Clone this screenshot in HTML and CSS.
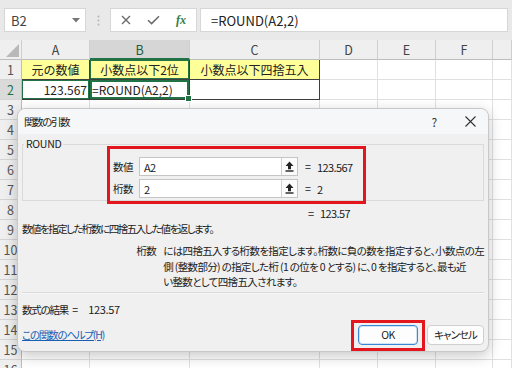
FILE: index.html
```html
<!DOCTYPE html>
<html lang="ja">
<head>
<meta charset="utf-8">
<link rel="stylesheet" href="styles.css">
</head>
<body>
<div class="app">
  <div class="fbar">
    <div class="namebox"><span>B2</span><svg class="dd" width="8" height="5" viewBox="0 0 8 5"><path d="M0 0H8L4 4.5Z" fill="#777"/></svg></div>
    <div class="dots"><svg width="3" height="11" viewBox="0 0 3 11"><circle cx="1.5" cy="1.5" r="1" fill="#b5b5b5"/><circle cx="1.5" cy="5.5" r="1" fill="#b5b5b5"/><circle cx="1.5" cy="9.5" r="1" fill="#b5b5b5"/></svg></div>
    <div class="fbtns">
      <svg width="10" height="10" viewBox="0 0 10 10"><path d="M1 1L9 9M9 1L1 9" stroke="#6b6b6b" stroke-width="1.4"/></svg>
      <svg width="13" height="10" viewBox="0 0 13 10"><path d="M1 5.2L4.6 8.6L12 1.2" stroke="#6b6b6b" stroke-width="1.5" fill="none"/></svg>
      <span class="fx">fx</span>
    </div>
    <div class="finput">=ROUND(A2,2)</div>
  </div>
  <div class="sheet">
    <div class="hd corner"><svg width="13" height="13" viewBox="0 0 13 13"><path d="M13 0V13H0Z" fill="#b9b9b9"/></svg></div>
    <div class="hd">A</div><div class="hd sel">B</div><div class="hd">C</div><div class="hd">D</div><div class="hd">E</div><div class="hd">F</div><div class="hd"></div>

    <div class="rh">1</div><div class="c t y ctr">元の数値</div><div class="c t y ctr gb1">小数点以下2位</div><div class="c t y ctr">小数点以下四捨五入</div><div class="c"></div><div class="c"></div><div class="c"></div><div class="c"></div>
    <div class="rh rsel">2</div><div class="c t r gb1">123.567</div><div class="c t gb2">=ROUND(A2,2)</div><div class="c t"></div><div class="c"></div><div class="c"></div><div class="c"></div><div class="c"></div>
    <div class="rh">3</div><div class="c"></div><div class="c"></div><div class="c"></div><div class="c"></div><div class="c"></div><div class="c"></div><div class="c"></div>
    <div class="rh">4</div><div class="c"></div><div class="c"></div><div class="c"></div><div class="c"></div><div class="c"></div><div class="c"></div><div class="c"></div>
    <div class="rh">5</div><div class="c"></div><div class="c"></div><div class="c"></div><div class="c"></div><div class="c"></div><div class="c"></div><div class="c"></div>
    <div class="rh">6</div><div class="c"></div><div class="c"></div><div class="c"></div><div class="c"></div><div class="c"></div><div class="c"></div><div class="c"></div>
    <div class="rh">7</div><div class="c"></div><div class="c"></div><div class="c"></div><div class="c"></div><div class="c"></div><div class="c"></div><div class="c"></div>
    <div class="rh">8</div><div class="c"></div><div class="c"></div><div class="c"></div><div class="c"></div><div class="c"></div><div class="c"></div><div class="c"></div>
    <div class="rh">9</div><div class="c"></div><div class="c"></div><div class="c"></div><div class="c"></div><div class="c"></div><div class="c"></div><div class="c"></div>
    <div class="rh">10</div><div class="c"></div><div class="c"></div><div class="c"></div><div class="c"></div><div class="c"></div><div class="c"></div><div class="c"></div>
    <div class="rh">11</div><div class="c"></div><div class="c"></div><div class="c"></div><div class="c"></div><div class="c"></div><div class="c"></div><div class="c"></div>
    <div class="rh">12</div><div class="c"></div><div class="c"></div><div class="c"></div><div class="c"></div><div class="c"></div><div class="c"></div><div class="c"></div>
    <div class="rh">13</div><div class="c"></div><div class="c"></div><div class="c"></div><div class="c"></div><div class="c"></div><div class="c"></div><div class="c"></div>
    <div class="rh">14</div><div class="c"></div><div class="c"></div><div class="c"></div><div class="c"></div><div class="c"></div><div class="c"></div><div class="c"></div>
    <div class="rh">15</div><div class="c"></div><div class="c"></div><div class="c"></div><div class="c"></div><div class="c"></div><div class="c"></div><div class="c"></div>
    <div class="rh">16</div><div class="c"></div><div class="c"></div><div class="c"></div><div class="c"></div><div class="c"></div><div class="c"></div><div class="c"></div>
  </div>

  <div class="dlg">
    <div class="dlg-title">
      <span class="ttl">関数の引数</span>
      <span class="tbtn">?</span>
      <span class="tbtn"><svg width="11" height="11" viewBox="0 0 11 11"><path d="M0.5 0.5L10.5 10.5M10.5 0.5L0.5 10.5" stroke="#333" stroke-width="1.1"/></svg></span>
    </div>
    <div class="dlg-body">
      <fieldset class="grp">
        <legend>ROUND</legend>
        <div class="arg">
          <span class="alabel">数値</span>
          <div class="field"><span class="fval">A2</span><span class="ref"><svg width="9" height="11" viewBox="0 0 9 11"><path d="M4.5 0.5L8.5 5H6V8.2H3V5H0.5Z" fill="#222"/><rect x="0.5" y="9.3" width="8" height="1.4" fill="#222"/></svg></span></div>
          <span class="eq">=</span><span class="aval">123.567</span>
        </div>
        <div class="arg">
          <span class="alabel">桁数</span>
          <div class="field"><span class="fval">2</span><span class="ref"><svg width="9" height="11" viewBox="0 0 9 11"><path d="M4.5 0.5L8.5 5H6V8.2H3V5H0.5Z" fill="#222"/><rect x="0.5" y="9.3" width="8" height="1.4" fill="#222"/></svg></span></div>
          <span class="eq">=</span><span class="aval">2</span>
        </div>
      </fieldset>
      <div class="resline"><span class="eq">=</span><span>123.57</span></div>
      <div class="desc">数値を指定した桁数に四捨五入した値を返します。</div>
      <div class="argdesc">
        <span class="adlabel">桁数</span>
        <span class="adtext">には四捨五入する桁数を指定します。桁数に負の数を指定すると、小数点の左<br>側 (整数部分) の指定した桁 (1 の位を 0 とする) に、0 を指定すると、最も近<br>い整数として四捨五入されます。</span>
      </div>
      <div class="sep"></div>
      <div class="fres"><span class="freslabel">数式の結果</span><span class="fresq">=</span><span class="fresv">123.57</span></div>
      <div class="foot">
        <span class="help">この関数のヘルプ(H)</span>
        <span class="btn ok">OK</span>
        <span class="btn cancel">キャンセル</span>
      </div>
    </div>
    <div class="redbox rb1"></div>
    <div class="redbox rb2"></div>
  </div>
</div>
</body>
</html>
```

FILE: styles.css
```css
* { box-sizing: border-box; }
html, body { margin: 0; padding: 0; }
body {
  width: 512px; height: 368px; overflow: hidden; background: #fff;
  font-family: "Noto Sans CJK JP", "Noto Sans", sans-serif;
}
.app { position: relative; width: 512px; height: 368px; overflow: hidden; }

/* formula bar */
.fbar {
  height: 40px; background: #e9e9e9;
  display: flex; align-items: flex-start; padding: 8px 4px 0 4px;
}
.namebox {
  width: 82px; height: 24px; background: #fff; border: 1px solid #d6d6d6;
  display: flex; align-items: center; justify-content: space-between;
  padding: 0 5px 0 6px; font-size: 13px; color: #444;
}
.dots { width: 24px; height: 24px; display: flex; align-items: center; justify-content: center; }
.fbtns {
  width: 87px; height: 24px; background: #fff; border: 1px solid #d6d6d6;
  display: flex; align-items: center; justify-content: space-between; padding: 0 10px 0 10px;
}
.fx { font-family: "Liberation Serif", serif; font-style: italic; font-size: 12px; color: #2f7d4a; font-weight: bold; }
.finput {
  flex: 1; height: 24px; margin-left: 3px; background: #fff; border: 1px solid #d6d6d6;
  font-size: 13px; color: #222; padding-left: 10px; display: flex; align-items: center;
}

/* sheet grid */
.sheet {
  display: grid;
  grid-template-columns: 22px 68px 100px 130px 58px 58px 57px 19px;
  grid-auto-rows: 20px;
  font-size: 12px; color: #222;
}
.hd {
  background: #efefef; border-right: 1px solid #cfcfcf; border-bottom: 1px solid #bdbdbd;
  display: flex; align-items: center; justify-content: center; color: #444; font-size: 12.5px;
}
.hd.corner { justify-content: flex-end; align-items: flex-end; padding: 0 2px 2px 0; }
.hd.sel { background: #d6d6d6; border-bottom: 2px solid #217346; color: #1f5e3a; }
.rh {
  background: #efefef; border-right: 1px solid #bdbdbd; border-bottom: 1px solid #d4d4d4;
  display: flex; align-items: center; justify-content: center; color: #555; font-size: 12.5px;
}
.rh.rsel { background: #dadada; color: #217346; }
.c {
  border-right: 1px solid #e0e0e0; border-bottom: 1px solid #e0e0e0;
  display: flex; align-items: center; padding: 0 2px; white-space: nowrap; overflow: visible;
}
.c.t { border-right: 1px solid #3f3f3f; border-bottom: 1px solid #3f3f3f; }
.c.y { background: #ffff99; }
.c.ctr { justify-content: center; }
.c.r { justify-content: flex-end; }
.gb1 { box-shadow: inset 0 0 0 1px #217346; }
.gb2 { box-shadow: inset 0 0 0 2px #217346; position: relative; }
.gb2::after {
  content: ""; position: absolute; right: -3px; bottom: -3px; width: 5px; height: 5px;
  background: #217346; border: 1px solid #fff;
}

/* dialog */
.dlg {
  position: absolute; left: 17px; top: 108px; width: 472px; height: 244px;
  background: #f0f0f0; border: 1px solid #c8c8c8; border-radius: 8px;
  box-shadow: 0 4px 14px rgba(0,0,0,0.22);
  display: flex; flex-direction: column;
  font-size: 10.5px; color: #1b1b1b; letter-spacing: -0.6px;
  font-feature-settings: "palt";
}
.dlg-title {
  height: 25px; background: #f6f7f9; border-radius: 8px 8px 0 0;
  display: flex; align-items: center; padding-left: 6px;
}
.ttl { flex: 1; font-size: 10.5px; letter-spacing: -1.4px; }
.tbtn { width: 36px; height: 25px; display: flex; align-items: center; justify-content: center; font-size: 12px; color: #333; }
.dlg-body { flex: 1; display: flex; flex-direction: column; padding: 2px 4px 0 4px; }
.grp {
  margin: 0; padding: 5px 0 0 1px; border: 1px solid #dadada; height: 65px;
  display: flex; flex-direction: column; gap: 3px;
}
.grp legend { padding: 0 2px; margin: 0; line-height: 16px; font-size: 10.5px; letter-spacing: -0.3px; }
.arg { display: flex; align-items: center; height: 19px; margin-left: 89px; }
.alabel { width: 26px; }
.field {
  width: 159px; height: 19px; background: #fff; border: 1px solid #c5c5c5;
  display: flex; align-items: center; justify-content: space-between; font-size: 11px;
}
.fval { padding-left: 4px; }
.ref {
  width: 16px; height: 17px; border-left: 1px solid #d0d0d0; background: #fbfbfb;
  display: flex; align-items: center; justify-content: center;
}
.eq { width: 12px; margin-left: 7px; }
.aval { font-size: 11px; }
.resline { display: flex; padding-left: 279px; height: 15px; margin-top: 4px; align-items: center; font-size: 11px; }
.desc { height: 15px; line-height: 15px; margin-top: 1px; white-space: nowrap; letter-spacing: -1.5px; }
.argdesc { display: flex; margin-top: 7px; line-height: 15.5px; white-space: nowrap; }
.adlabel { width: 158px; text-align: right; padding-right: 7px; }
.adtext { letter-spacing: -0.65px; }
.sep { margin-top: 2px; border-top: 1px solid #dadada; border-bottom: 1px solid #f8f8f8; }
.fres { margin-top: 8px; height: 15px; line-height: 15px; display: flex; }
.freslabel { letter-spacing: -1.2px; }
.fresq { margin-left: 4px; width: 16px; }
.fresv { font-size: 11px; letter-spacing: -0.3px; }
.foot { display: flex; align-items: center; margin-top: 7px; height: 22px; }
.help { flex: 1; color: #1a5fb4; text-decoration: underline; letter-spacing: -1.2px; }
.btn {
  height: 20px; display: flex; align-items: center; justify-content: center;
  background: #fdfdfd; border: 1px solid #cfcfcf; border-radius: 4px; font-size: 10.5px;
}
.btn.ok { width: 60px; border: 1px solid #3a86d4; box-shadow: inset 0 0 0 1px #cfe2f6; }
.btn.cancel { width: 57px; margin-left: 9px; letter-spacing: -1px; }
.redbox { position: absolute; border: 3px solid #e3161e; }
.rb1 { left: 89px; top: 37px; width: 259px; height: 58px; }
.rb2 { left: 333px; top: 211px; width: 74px; height: 31px; }
```
